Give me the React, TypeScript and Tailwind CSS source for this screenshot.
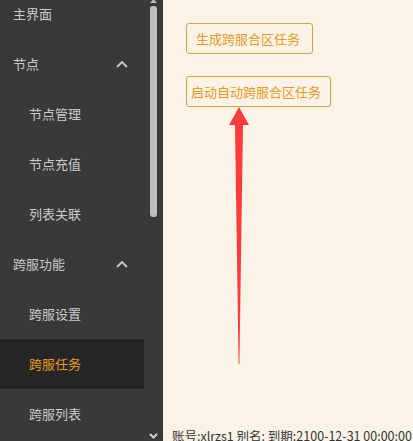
const font = { fontFamily: '"Microsoft YaHei", "Noto Sans CJK SC", "Noto Sans", sans-serif' };

type Item = { label: string; level: 0 | 1; open?: boolean; active?: boolean };

const items: Item[] = [
    { label: "主界面", level: 0 },
    { label: "节点", level: 0, open: true },
    { label: "节点管理", level: 1 },
    { label: "节点充值", level: 1 },
    { label: "列表关联", level: 1 },
    { label: "跨服功能", level: 0, open: true },
    { label: "跨服设置", level: 1 },
    { label: "跨服任务", level: 1, active: true },
    { label: "跨服列表", level: 1 },
];

const ChevronUp = () => (
    <svg width="12" height="8" viewBox="0 0 12 8" className="ml-auto mr-[16px]">
        <polyline points="1,7 6,2 11,7" fill="none" stroke="#c8c8c8" strokeWidth="1.8" />
    </svg>
);

const Sidebar = () => (
    <div className="flex h-full w-[163px] shrink-0 bg-[#393939]">
        <div className="w-[144px] -mt-[11px]">
            {items.map((item) => (
                <div
                    key={item.label}
                    className={`flex h-[50px] items-center text-[13px] ${item.level === 0 ? "pl-[13px]" : "pl-[29px]"} ${
                        item.active ? "bg-[#262626] text-[#e89a1e]" : "text-[#cacaca]"
                    }`}
                >
                    <span>{item.label}</span>
                    {item.open && <ChevronUp />}
                </div>
            ))}
        </div>
        <div className="flex w-[19px] flex-col items-center">
            <svg width="7" height="4" viewBox="0 0 7 4" className="-mt-[1px]">
                <polygon points="0,4 3.5,0 7,4" fill="#bdbdbd" />
            </svg>
            <div className="mt-[3px] h-[211px] w-[7px] rounded-[3px] bg-[#bdbdbd]" />
            <div className="mt-auto mb-[2px]">
                <svg width="9" height="6" viewBox="0 0 9 6">
                    <polyline points="1,1 4.5,4.5 8,1" fill="none" stroke="#d0d0d0" strokeWidth="2" />
                </svg>
            </div>
        </div>
    </div>
);

// red annotation arrow drawn over the page
const Arrow = () => (
    <svg className="absolute left-[62px] top-[107px]" width="24" height="260" viewBox="0 0 24 260">
        <polygon points="14,0 24,18 18,18 14.4,257 13.6,257 10,18 4,18" fill="#ff3b3b" />
    </svg>
);

export default function App() {
    return (
        <div className="flex h-[441px] w-[413px] overflow-hidden" style={font}>
            <Sidebar />
            <div className="relative flex min-w-0 flex-1 flex-col bg-[#fbf3e8]">
                <div className="flex flex-col items-start gap-[22px] pl-[23px] pt-[23px]">
                    <button className="flex h-[31px] w-[127px] items-center rounded-[3px] border border-[#e3a23a] pl-[9px] text-[13px] text-[#e89a1e]">
                        生成跨服合区任务
                    </button>
                    <button className="flex h-[31px] w-[145px] items-center whitespace-nowrap rounded-[3px] border border-[#e3a23a] pl-[4px] text-[13px] text-[#e89a1e]">
                        启动自动跨服合区任务
                    </button>
                </div>
                <Arrow />
                <div className="mt-auto h-[13px] overflow-hidden whitespace-nowrap pl-[9px] text-[12.5px] leading-[16px] text-[#333]">
                    账号:xlrzs1 别名: 到期:2100-12-31 00:00:00
                </div>
            </div>
        </div>
    );
}
